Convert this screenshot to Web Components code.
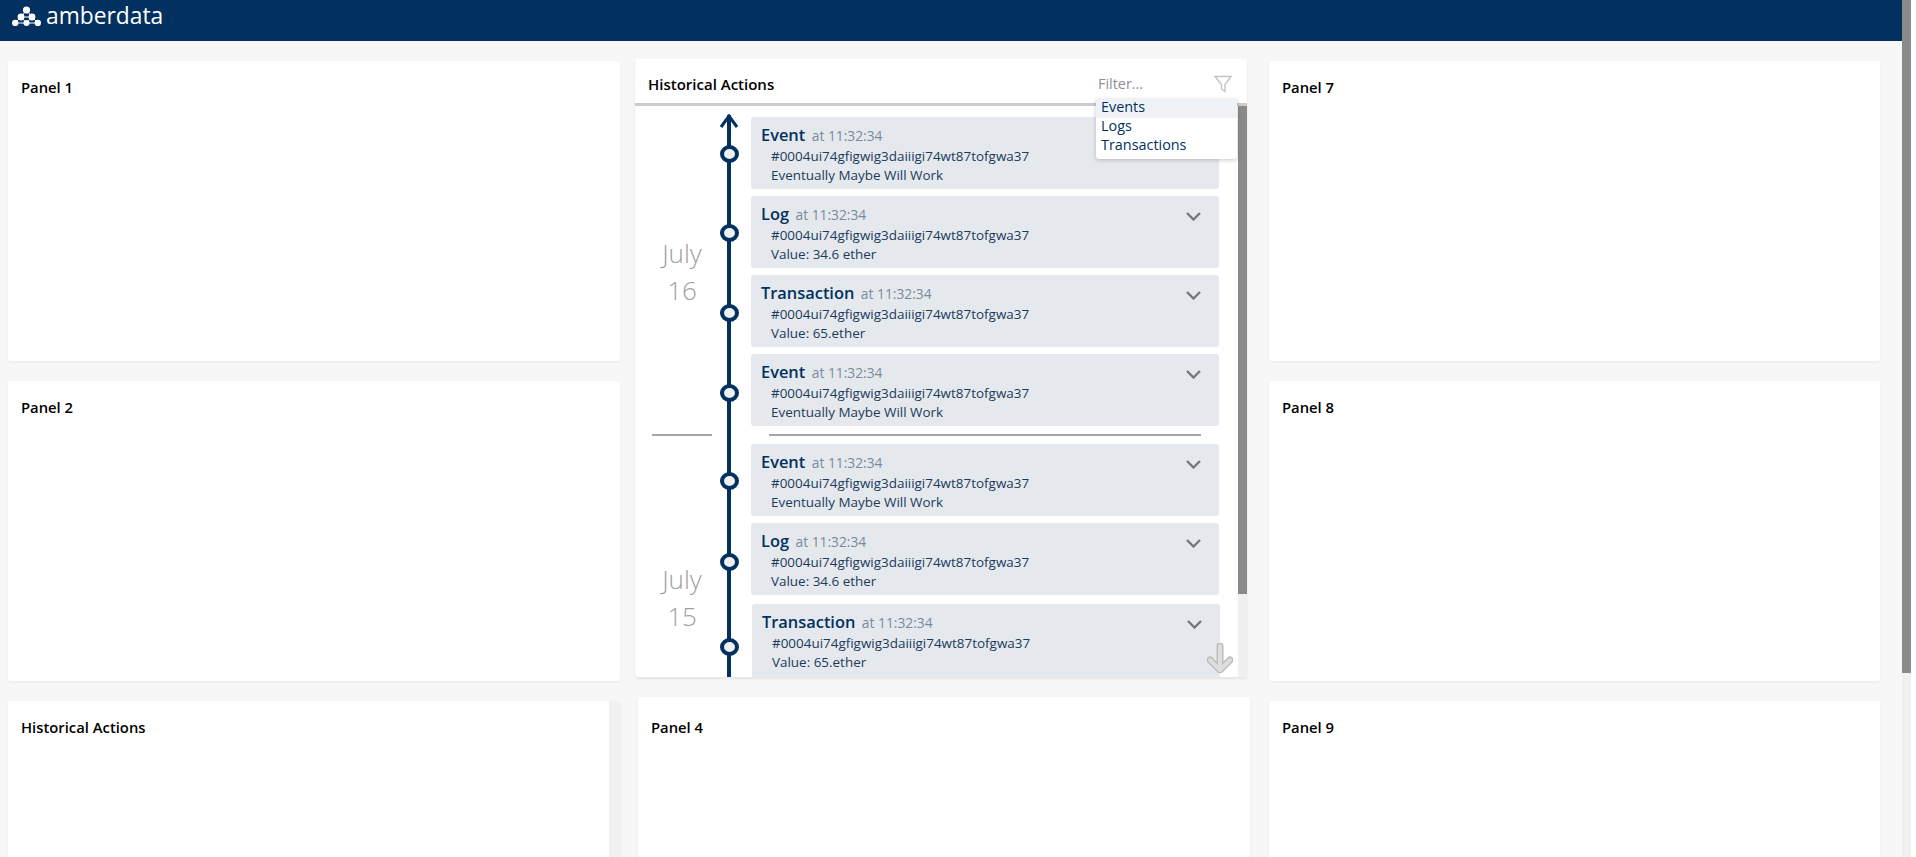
<!DOCTYPE html>
<html lang="en">
<head>
<meta charset="UTF-8">
<title>Amberdata panels</title>
<style>
  html, body { margin: 0; height: 857px; overflow: hidden; background: #fff; }
  body { font-family: "Open Sans", "Liberation Sans", sans-serif; }
</style>
</head>
<body>
<dash-app>
  <dash-column slot="left">
    <dash-panel title="Panel 1"></dash-panel>
    <dash-panel title="Panel 2"></dash-panel>
    <dash-panel title="Historical Actions" scrollbar></dash-panel>
  </dash-column>
  <dash-column slot="middle">
    <history-panel>
      <day-group month="July" day="16">
        <action-card kind="Event" detail="Eventually Maybe Will Work" node="28"></action-card>
        <action-card kind="Log" detail="Value: 34.6 ether" node="28.5"></action-card>
        <action-card kind="Transaction" detail="Value: 65.ether" node="29.5"></action-card>
        <action-card kind="Event" detail="Eventually Maybe Will Work" node="30.5"></action-card>
      </day-group>
      <day-divider></day-divider>
      <day-group month="July" day="15" style="height:308px">
        <action-card kind="Event" detail="Eventually Maybe Will Work" node="28.5"></action-card>
        <action-card kind="Log" detail="Value: 34.6 ether" node="30.5"></action-card>
        <action-card kind="Transaction" detail="Value: 65.ether" node="34.5" style="margin:2px 0 0 0;height:78px" shift></action-card>
      </day-group>
    </history-panel>
    <dash-panel title="Panel 4" style="margin:0 -3px 0 3px" low></dash-panel>
  </dash-column>
  <dash-column slot="right" style="width:611px">
    <dash-panel title="Panel 7"></dash-panel>
    <dash-panel title="Panel 8"></dash-panel>
    <dash-panel title="Panel 9"></dash-panel>
  </dash-column>
</dash-app>

<script>
// page shell: header bar, three columns and the window scrollbar
class DashApp extends HTMLElement {
  constructor() {
    super();
    this.attachShadow({ mode: 'open' });
    this.shadowRoot.innerHTML = `
      <style>
        :host { display: flex; height: 857px; }
        .page { width: 1902px; height: 857px; overflow: hidden; background: #f7f7f7; display: flex; flex-direction: column; }
        .bar { height: 41px; flex: none; box-sizing: border-box; background: #03315f; display: flex; align-items: center; padding: 0 0 10px 12px; color: #fff; font-size: 22.8px; font-weight: 400; }
        .bar svg { display: block; margin-right: 5px; }
        .cols { display: flex; padding: 20px 0 0 8px; }
        .cols ::slotted([slot="middle"]) { margin: -2px 22px 0 15px; }
        .sb { width: 9px; height: 857px; background: #f0f0f0; flex: none; }
        .sb div { height: 673px; background: #8a8a8a; }
      </style>
      <div class="page">
        <div class="bar">
          <svg width="29" height="20" viewBox="0 0 29 20" fill="#fff" stroke="#fff">
            <path d="M14.5 4 9 11 3 17M14.5 4 20 11 26 17M3 17H26M9 11H20M9 11 14.5 17 20 11" fill="none" stroke-width="1"/>
            <g stroke="none">
              <circle cx="14.5" cy="4" r="3.6"/>
              <circle cx="9" cy="11" r="3.4"/><circle cx="20" cy="11" r="3.4"/>
              <circle cx="3.2" cy="17" r="3.2"/><circle cx="14.5" cy="17" r="3"/><circle cx="25.8" cy="17" r="3.2"/>
            </g>
          </svg>
          <span>amberdata</span>
        </div>
        <div class="cols">
          <slot name="left"></slot>
          <slot name="middle"></slot>
          <slot name="right"></slot>
        </div>
      </div>
      <div class="sb"><div></div></div>`;
  }
}

class DashColumn extends HTMLElement {
  constructor() {
    super();
    this.attachShadow({ mode: 'open' });
    this.shadowRoot.innerHTML = `
      <style>:host { display: flex; flex-direction: column; gap: 20px; width: 612px; flex: none; }</style>
      <slot></slot>`;
  }
}

// plain empty panel with a title
class DashPanel extends HTMLElement {
  constructor() {
    super();
    this.attachShadow({ mode: 'open' });
  }
  connectedCallback() {
    const title = this.getAttribute('title') || '';
    this.removeAttribute('title');
    const low = this.hasAttribute('low');
    this.shadowRoot.innerHTML = `
      <style>
        :host { display: flex; height: 300px; flex: none; background: #fff; border-radius: 3px; box-shadow: 0 1px 3px rgba(0,0,0,.06); overflow: hidden; }
        .in { flex: 1; padding: ${low ? 20 : 16}px 13px; font-size: 14.8px; font-weight: 600; color: #000; line-height: 20px; }
        .sb { width: 11px; background: #f0f0f0; }
      </style>
      <div class="in">${title}</div>
      ${this.hasAttribute('scrollbar') ? '<div class="sb"></div>' : ''}`;
  }
}

// the open panel with timeline, filter box and inner scrollbar
class HistoryPanel extends HTMLElement {
  constructor() {
    super();
    this.attachShadow({ mode: 'open' });
    this.shadowRoot.innerHTML = `
      <style>
        :host { display: flex; flex-direction: column; height: 618px; flex: none; background: #fff; border-radius: 3px; box-shadow: 0 2px 3px rgba(0,0,0,.08); position: relative; }
        .head { flex: none; box-sizing: border-box; display: flex; align-items: center; justify-content: space-between; padding: 6px 15px 0 13px; border-bottom: 3px solid #cccccc; height: 47px; }
        h2 { margin: 0; font-size: 15px; font-weight: 600; color: #000; }
        .body { flex: 1; min-height: 0; display: flex; }
        .track { flex: 1; min-width: 0; overflow: hidden; position: relative; padding-top: 11px; background: linear-gradient(#03315f, #03315f) no-repeat 92px 9px / 4px 100%; }
        .up { position: absolute; left: 84px; top: 8px; }
        .down { position: absolute; left: 572px; top: 537px; }
        .sb { width: 9px; flex: none; background: #f0f0f0; }
        .sb div { height: 488px; background: #8a8a8a; }
        filter-box { position: absolute; top: 12px; left: 461px; z-index: 2; }
      </style>
      <div class="head">
        <h2>Historical Actions</h2>
      </div>
      <filter-box></filter-box>
      <div class="body">
        <div class="track">
          <svg class="up" width="20" height="16" viewBox="0 0 20 16" fill="none" stroke="#03315f" stroke-width="3"><path d="M2 13 10 2 18 13M10 2V16"/></svg>
          <slot></slot>
          <svg class="down" width="26" height="30" viewBox="0 0 26 30" fill="none" stroke-linejoin="round" stroke-linecap="round">
            <path d="M13 3V26M3 17 13 27 23 17" stroke="#bdbdbd" stroke-width="7"/>
            <path d="M13 3V26M3 17 13 27 23 17" stroke="#dcdee0" stroke-width="4"/>
          </svg>
        </div>
        <div class="sb"><div></div></div>
      </div>`;
  }
}

class FilterBox extends HTMLElement {
  constructor() {
    super();
    this.attachShadow({ mode: 'open' });
    this.shadowRoot.innerHTML = `
      <style>
        :host { display: block; width: 141px; color: #03315f; font-size: 14.4px; }
        .top { display: flex; align-items: center; justify-content: space-between; height: 28px; box-sizing: border-box; padding: 0 5px 3px 2px; color: #8f8f8f; }
        ul { list-style: none; margin: 0; padding: 0; background: #fff; border-radius: 0 0 3px 3px; box-shadow: 0 1px 4px rgba(0,0,0,.22); height: 60px; }
        li { height: 19px; line-height: 16px; padding-left: 5px; }
        li:first-child { background: #f0f3f6; }
        svg { display: block; }
      </style>
      <div class="top">
        <span>Filter...</span>
        <svg width="18" height="18" viewBox="0 0 18 18" fill="#fff" stroke="#c4c4c4" stroke-width="1.4"><path d="M1 1.5H17L11 9.5V16.5L7.5 14V9.5Z"/></svg>
      </div>
      <ul><li>Events</li><li>Logs</li><li>Transactions</li></ul>`;
  }
}

// one day of the timeline: the date on the left, the cards slotted to the right
class DayGroup extends HTMLElement {
  constructor() {
    super();
    this.attachShadow({ mode: 'open' });
  }
  connectedCallback() {
    this.shadowRoot.innerHTML = `
      <style>
        :host { display: flex; padding-left: 17px; }
        .date { width: 60px; flex: none; align-self: center; text-align: center; font-size: 26px; font-weight: 300; line-height: 37px; color: #9f9f9f; margin-right: 5px; }
        .list { display: flex; flex-direction: column; gap: 7px; }
      </style>
      <div class="date">${this.getAttribute('month')}<br>${this.getAttribute('day')}</div>
      <div class="list"><slot></slot></div>`;
  }
}

class DayDivider extends HTMLElement {
  constructor() {
    super();
    this.attachShadow({ mode: 'open' });
    this.shadowRoot.innerHTML = `
      <style>
        :host { display: flex; height: 18px; padding-left: 17px; align-items: center; }
        i { display: block; height: 2px; background: #a5a5a5; }
        .a { width: 60px; }
        .b { width: 432px; margin-left: 57px; }
      </style>
      <i class="a"></i><i class="b"></i>`;
  }
}

class ActionCard extends HTMLElement {
  constructor() {
    super();
    this.attachShadow({ mode: 'open' });
  }
  connectedCallback() {
    const kind = this.getAttribute('kind');
    const detail = this.getAttribute('detail');
    const node = this.getAttribute('node') || 28;
    const shift = this.hasAttribute('shift') ? 1 : 0;
    this.shadowRoot.innerHTML = `
      <style>
        :host { display: flex; height: 72px; flex: none; }
        .rail { width: 24px; flex: none; margin-right: 10px; padding-top: ${node - 0.5}px; box-sizing: border-box; display: flex; justify-content: center; }
        .node { width: 19px; height: 18px; box-sizing: border-box; border: 4px solid #03315f; border-radius: 50%; background: #f0f1f3; }
        .card { width: 468px; margin-left: ${shift}px; box-sizing: border-box; background: #e5e9ed; border-radius: 3px; padding: 6px 10px; position: relative; color: #1b3b5c; font-size: 13.45px; }
        .t { display: flex; align-items: baseline; height: 24px; color: #03315f; font-size: 16.4px; font-weight: 600; }
        .t span { font-size: 13.8px; font-weight: 400; color: #7a8a9c; margin-left: 6.5px; }
        .l { height: 19px; line-height: 19px; padding-left: 10px; }
        svg { position: absolute; top: 16px; right: 18px; }
      </style>
      <div class="rail"><div class="node"></div></div>
      <div class="card">
        <div class="t">${kind}<span>at 11:32:34</span></div>
        <div class="l">#0004ui74gfigwig3daiiigi74wt87tofgwa37</div>
        <div class="l">${detail}</div>
        <svg width="15" height="9" viewBox="0 0 15 9" fill="none" stroke="#777" stroke-width="2.4"><path d="M1 1 7.5 7.5 14 1"/></svg>
      </div>`;
  }
}

customElements.define('dash-app', DashApp);
customElements.define('dash-column', DashColumn);
customElements.define('dash-panel', DashPanel);
customElements.define('history-panel', HistoryPanel);
customElements.define('filter-box', FilterBox);
customElements.define('day-group', DayGroup);
customElements.define('day-divider', DayDivider);
customElements.define('action-card', ActionCard);
</script>
</body>
</html>
